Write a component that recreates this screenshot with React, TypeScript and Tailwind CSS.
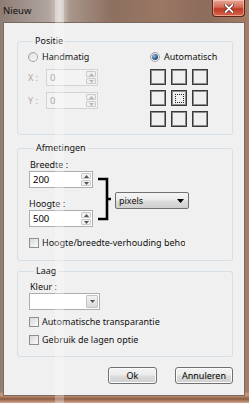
import React from "react";

function Radio({ checked }: { checked?: boolean }) {
  return (
    <span className="flex h-[10px] w-[10px] shrink-0 items-center justify-center rounded-full border border-[#a3a3a3] bg-gradient-to-br from-[#dedede] to-[#fbfbfb]">
      {checked && (
        <span className="h-[6px] w-[6px] rounded-full bg-[radial-gradient(circle_at_35%_35%,#9cc3e8_0%,#2a5d8f_55%,#173a5e_100%)]" />
      )}
    </span>
  );
}

function Check() {
  return (
    <span className="h-[10px] w-[10px] shrink-0 border border-[#8e8f8f] bg-gradient-to-br from-[#d9d9d9] to-[#fbfbfb]" />
  );
}

function Arrow({ up, color }: { up?: boolean; color: string }) {
  return (
    <svg width="5" height="3" viewBox="0 0 5 3">
      <path d={up ? "M0 3 L2.5 0 L5 3 Z" : "M0 0 L5 0 L2.5 3 Z"} fill={color} />
    </svg>
  );
}

function Spin({ value, disabled }: { value: string; disabled?: boolean }) {
  const arrow = disabled ? "#b8b8b8" : "#555";
  return (
    <div
      className={[
        "flex h-[17px] items-stretch border",
        disabled ? "w-[52px] border-[#d3d3d3] bg-[#f3f3f3] text-[#a9a9a9]" : "w-[64px] border-[#abadb3] bg-white text-black",
      ].join(" ")}
    >
      <span className="flex-1 pl-[3px] text-[9.5px] leading-[15px]">{value}</span>
      <div className="flex w-[11px] flex-col gap-[1px] py-[1px] pr-[1px]">
        <span className="flex flex-1 items-center justify-center rounded-[1px] border border-[#c9c9c9] bg-[#f1f1f1]">
          <Arrow up color={arrow} />
        </span>
        <span className="flex flex-1 items-center justify-center rounded-[1px] border border-[#c9c9c9] bg-[#f1f1f1]">
          <Arrow color={arrow} />
        </span>
      </div>
    </div>
  );
}

function Cell({ center }: { center?: boolean }) {
  return (
    <span className="flex h-[16px] w-[16px] items-center justify-center border border-[#3a3a3a] bg-[#f0f0f0] shadow-[inset_0_0_0_1px_#8c8c8c]">
      {center && <span className="h-[9px] w-[9px] border border-dotted border-[#222]" />}
    </span>
  );
}

function Button({ label, w }: { label: string; w: string }) {
  return (
    <button
      className={`${w} flex h-[17px] items-center justify-center rounded-[3px] border border-[#707070] bg-[linear-gradient(#f3f3f3_0%,#ebebeb_48%,#dddddd_52%,#cfcfcf_100%)] shadow-[inset_0_0_0_1px_#fbfbfb] leading-none text-black`}
    >
      {label}
    </button>
  );
}

export default function App() {
  return (
    <div className="relative h-[403px] w-[249px] overflow-hidden bg-[linear-gradient(180deg,transparent_0%,transparent_97%,#d29c7c_98%,#8a5c44_99%,#d6a88c_100%),linear-gradient(90deg,#8d7d73_0%,#a39590_12%,#b3a7a1_20%,#d9d1cc_24%,#a8968b_28%,#8d7060_45%,#9a7664_65%,#8c6c5c_82%,#a57d66_100%)] font-['Noto_Sans',sans-serif] text-[9px] leading-[12px] text-[#111]">
      {/* title bar */}
      <div className="flex h-[22px] items-start justify-between">
        <span className="pl-[3px] pt-[5px] text-[9.5px]">Nieuw</span>
        <span className="mr-[4px] flex h-[17px] w-[33px] items-center justify-center rounded-b-[4px] border border-t-0 border-[#5e2418] bg-[linear-gradient(#e8a898_0%,#d46a55_45%,#bb3a24_55%,#d9664a_100%)] shadow-[inset_0_0_0_1px_rgba(255,220,210,0.5)]">
          <svg width="10" height="9" viewBox="0 0 10 9">
            <path d="M1.5 1 L8.5 8 M8.5 1 L1.5 8" stroke="#5a1a10" strokeWidth="3.2" strokeLinecap="round" />
            <path d="M1.5 1 L8.5 8 M8.5 1 L1.5 8" stroke="#ffffff" strokeWidth="1.8" strokeLinecap="round" />
          </svg>
        </span>
      </div>

      {/* client area */}
      <div className="ml-[3px] h-[374px] w-[242px] border border-[#7b6a60] bg-[#f0f0f0] pl-[13px] pt-[12px]">
        {/* Positie */}
        <fieldset className="w-[216px] rounded-[3px] border border-[#d5dfe5] px-[10px] pb-[7px]">
          <legend className="ml-[5px] px-[2px]">Positie</legend>
          <div className="mt-[4px] flex">
            <div className="flex w-[122px] flex-col">
              <label className="flex h-[12px] items-center gap-[4px]">
                <Radio />
                <span>Handmatig</span>
              </label>
              <div className="mt-[6px] flex flex-col gap-[6px]">
                <div className="flex h-[17px] items-center">
                  <span className="w-[18px] text-[#a8a8a8]">X :</span>
                  <Spin value="0" disabled />
                </div>
                <div className="flex h-[17px] items-center">
                  <span className="w-[18px] text-[#a8a8a8]">Y :</span>
                  <Spin value="0" disabled />
                </div>
              </div>
            </div>
            <div className="flex flex-col">
              <label className="flex h-[12px] items-center gap-[4px]">
                <Radio checked />
                <span>Automatisch</span>
              </label>
              <div className="mt-[6px] grid grid-cols-[16px_16px_16px] gap-[5px]">
                <Cell />
                <Cell />
                <Cell />
                <Cell />
                <Cell center />
                <Cell />
                <Cell />
                <Cell />
                <Cell />
              </div>
            </div>
          </div>
        </fieldset>

        {/* Afmetingen */}
        <fieldset className="mt-[7px] w-[216px] rounded-[3px] border border-[#d5dfe5] px-[11px] pb-[11px]">
          <legend className="ml-[5px] px-[2px]">Afmetingen</legend>
          <div className="mt-[5px] flex items-start">
            <div className="flex flex-col">
              <span className="h-[12px] pl-[1px]">Breedte :</span>
              <Spin value="200" />
              <span className="mt-[10px] h-[12px]">Hoogte :</span>
              <Spin value="500" />
            </div>
            <svg className="ml-[5px]" width="14" height="68" viewBox="0 0 14 68">
              <path d="M0 20 H9 V60 H0 M9 40 H13" fill="none" stroke="#000" strokeWidth="2.6" />
            </svg>
            <div className="ml-[3px] mt-[33px] flex h-[17px] w-[74px] items-center justify-between rounded-[2px] border border-[#707070] bg-[linear-gradient(#f4f4f4_0%,#ebebeb_48%,#dddddd_52%,#cfcfcf_100%)] pl-[3px] pr-[4px]">
              <span>pixels</span>
              <svg width="7" height="4" viewBox="0 0 7 4">
                <path d="M0 0 H7 L3.5 4 Z" fill="#000" />
              </svg>
            </div>
          </div>
          <label className="mt-[10px] flex h-[12px] items-center gap-[3px]">
            <Check />
            <span className="w-[143px] overflow-hidden whitespace-nowrap">Hoogte/breedte-verhouding behouden</span>
          </label>
        </fieldset>

        {/* Laag */}
        <fieldset className="mt-[4px] w-[216px] rounded-[3px] border border-[#d5dfe5] px-[11px] pb-[10px]">
          <legend className="ml-[5px] px-[2px]">Laag</legend>
          <span className="mt-[4px] block h-[12px] pl-[1px]">Kleur :</span>
          <div className="flex h-[17px] w-[71px] border border-[#abadb3] bg-white">
            <span className="flex-1" />
            <span className="m-[1px] flex w-[12px] items-center justify-center rounded-[1px] border border-[#c3c3c3] bg-[linear-gradient(#f2f2f2,#dadada)]">
              <Arrow color="#555" />
            </span>
          </div>
          <label className="mt-[6px] flex h-[12px] items-center gap-[3px]">
            <Check />
            <span>Automatische transparantie</span>
          </label>
          <label className="mt-[6px] flex h-[12px] items-center gap-[3px]">
            <Check />
            <span>Gebruik de lagen optie</span>
          </label>
        </fieldset>

        <div className="mt-[10px] flex w-[216px] justify-end gap-[18px]">
          <Button label="Ok" w="w-[49px]" />
          <Button label="Annuleren" w="w-[58px]" />
        </div>
      </div>

      {/* glass reflection streak */}
      <span className="pointer-events-none absolute left-[55px] top-0 h-full w-[9px] bg-white/30" aria-hidden="true" />
    </div>
  );
}
